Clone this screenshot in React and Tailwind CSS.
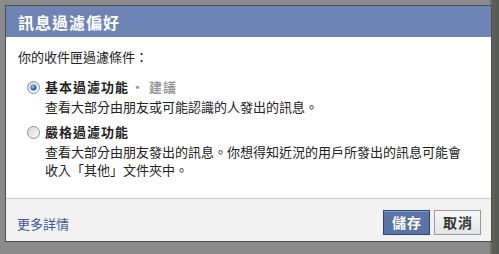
import React from "react";

const font = { fontFamily: '"Noto Sans CJK TC", "Noto Sans", "Liberation Sans", sans-serif' };

function Radio({ checked }) {
  return (
    <svg width="13" height="13" viewBox="0 0 13 13">
      <defs>
        <linearGradient id={checked ? "rg1" : "rg0"} x1="0" y1="0" x2="1" y2="1">
          <stop offset="0" stopColor="#d4d4d4" />
          <stop offset="1" stopColor="#ffffff" />
        </linearGradient>
        <radialGradient id="dot" cx="0.4" cy="0.35" r="0.7">
          <stop offset="0" stopColor="#9fd3ff" />
          <stop offset="0.5" stopColor="#2b7fd6" />
          <stop offset="1" stopColor="#0b3f86" />
        </radialGradient>
      </defs>
      <circle cx="6.5" cy="6.5" r="6" fill={`url(#${checked ? "rg1" : "rg0"})`} stroke="#8e8f8f" strokeWidth="1" />
      {checked && <circle cx="6.5" cy="6.5" r="3" fill="url(#dot)" />}
    </svg>
  );
}

function Option({ checked, title, note, lines }) {
  return (
    <div className="flex pl-[9px]">
      <div className="h-[20px] flex items-center">
        <Radio checked={checked} />
      </div>
      <div className="ml-[5px]">
        <div className="h-[20px] leading-[20px] text-[13px] font-bold tracking-[1px] text-[#222]">
          {title}
          {note && <span className="ml-[2px] text-[#999]">‧ {note}</span>}
        </div>
        <div className="mt-[1px] text-[13px] leading-[18px] text-[#222]">
          {lines.map((l, i) => (
            <div key={i}>{l}</div>
          ))}
        </div>
      </div>
    </div>
  );
}

export default function App() {
  return (
    <div
      className="w-[499px] h-[254px] overflow-hidden bg-[linear-gradient(90deg,#8b8b8b_0%,#8b8b8b_98%,#5e625c_98.6%,#56594f_100%)] pt-[5px] pl-[5px]"
      style={font}
    >
      <div className="w-[487px] h-[237px] border border-[#4d4d4d] flex flex-col bg-white">
        <div className="h-[31px] bg-[#6d84b4] flex items-center pl-[12px] text-white text-[16px] font-bold tracking-[1px]">
          訊息過濾偏好
        </div>
        <div className="h-[161px] px-[12px] pt-[11px]">
          <div className="text-[13px] leading-[18px] text-[#222]">你的收件匣過濾條件：</div>
          <div className="mt-[11px]">
            <Option
              checked
              title="基本過濾功能"
              note="建議"
              lines={["查看大部分由朋友或可能認識的人發出的訊息。"]}
            />
          </div>
          <div className="mt-[6px]">
            <Option
              title="嚴格過濾功能"
              lines={[
                "查看大部分由朋友發出的訊息。你想得知近況的用戶所發出的訊息可能會",
                "收入「其他」文件夾中。",
              ]}
            />
          </div>
        </div>
        <div className="flex-1 border-t border-[#cccccc] bg-[#f2f2f2] flex justify-between items-start pt-[11px] pl-[11px] pr-[10px]">
          <a className="mt-[6px] text-[13px] leading-[16px] text-[#3b5998]">更多詳情</a>
          <div className="flex gap-[4px]">
            <button className="w-[47px] h-[25px] pl-[1px] bg-[#5b74a8] border border-[#29447e] text-white text-[14px] font-bold tracking-[1px] flex items-center justify-center shadow-[inset_0_1px_0_#8a9cc2]">
              儲存
            </button>
            <button className="w-[47px] h-[25px] pl-[1px] bg-[linear-gradient(#f7f7f7,#e4e4e4)] border border-[#999999] text-[#333] text-[14px] font-bold tracking-[1px] flex items-center justify-center">
              取消
            </button>
          </div>
        </div>
      </div>
    </div>
  );
}
